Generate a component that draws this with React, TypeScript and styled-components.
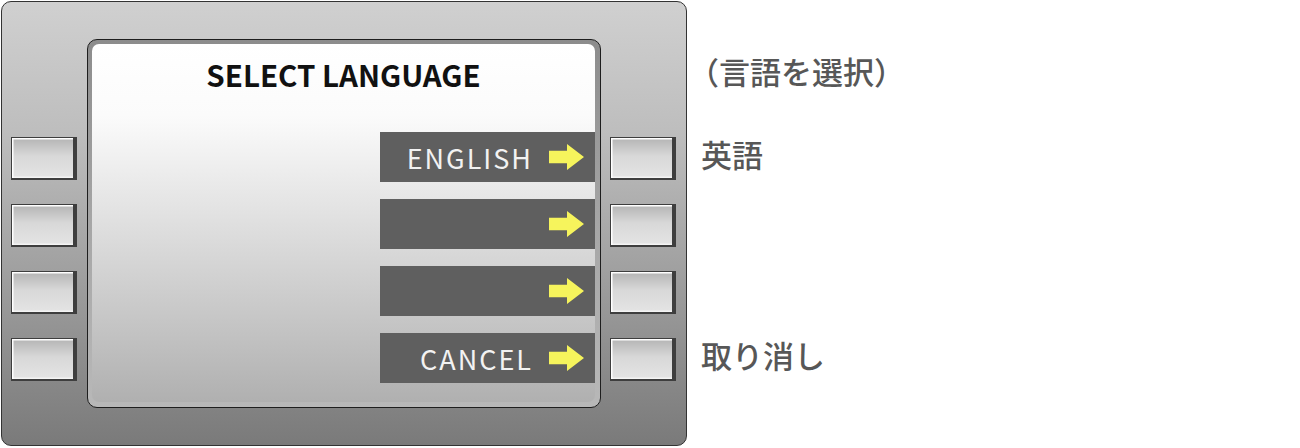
import React from 'react';
import styled, { createGlobalStyle } from 'styled-components';

interface Option {
	label: string;
	note: string;
}

const options: Option[] = [
	{ label: 'ENGLISH', note: '英語' },
	{ label: '', note: '' },
	{ label: '', note: '' },
	{ label: 'CANCEL', note: '取り消し' },
];

const GlobalStyle = createGlobalStyle`
	html, body {
		margin: 0;
		padding: 0;
		background: #ffffff;
	}
	body {
		font-family: "Noto Sans CJK JP", "Noto Sans", sans-serif;
	}
`;

const Page = styled.div`
	display: flex;
	align-items: flex-start;
	padding: 1px 0 0 1px;
	width: 1300px;
	height: 448px;
	box-sizing: border-box;
`;

const Machine = styled.div`
	display: flex;
	align-items: flex-start;
	width: 686px;
	height: 445px;
	box-sizing: border-box;
	padding: 36.5px 0 0 8.5px;
	border: 1.5px solid #333333;
	border-radius: 10px;
	background: linear-gradient(180deg, #d0d0d0 0%, #bdbdbd 30%, #9c9c9c 65%, #7a7a7a 100%);
`;

const KeyColumn = styled.div`
	display: flex;
	flex-direction: column;
	gap: 24px;
	width: 66px;
	margin-top: 98px;
`;

const Key = styled.div`
	width: 66px;
	height: 43px;
	box-sizing: border-box;
	border: 1.5px solid #3e3e3e;
	border-right-width: 4px;
	border-bottom-width: 2px;
	box-shadow: inset 1.5px 1.5px 0 #ffffff, inset 0 -1.5px 0 #f4f4f4;
	background: linear-gradient(180deg, #b4b4b4 0%, #d8d8d8 45%, #e4e4e4 100%);
`;

const Screen = styled.div`
	width: 514px;
	height: 369px;
	margin: 0 9px 0 10px;
	box-sizing: border-box;
	padding: 4.5px;
	border: 1.5px solid #1e1e1e;
	border-radius: 10px;
	background: linear-gradient(180deg, #8c8c8c 0%, #a6a6a6 50%, #b8b8b8 100%);
`;

const Display = styled.div`
	display: flex;
	flex-direction: column;
	align-items: flex-end;
	height: 100%;
	box-sizing: border-box;
	padding-top: 5px;
	border-radius: 7px;
	background: linear-gradient(180deg, #ffffff 0%, #fbfbfb 20%, #e4e4e4 45%, #c8c8c8 75%, #b0b0b0 100%);
`;

const Title = styled.h1`
	align-self: stretch;
	margin: 0 0 33px;
	height: 50px;
	line-height: 50px;
	text-align: center;
	font-size: 29.5px;
	font-weight: 700;
	color: #111111;
`;

const Rows = styled.div`
	display: flex;
	flex-direction: column;
	gap: 17px;
`;

const Row = styled.div`
	display: flex;
	align-items: center;
	justify-content: flex-end;
	gap: 16px;
	width: 215px;
	height: 50px;
	box-sizing: border-box;
	padding-right: 11px;
	background: #5f5f5f;
`;

const RowText = styled.span`
	font-size: 27px;
	letter-spacing: 2px;
	color: #f2f2f2;
	line-height: 1;
`;

const Notes = styled.div`
	display: flex;
	flex-direction: column;
	gap: 17px;
	padding: 45px 0 0 14px;
`;

const Note = styled.div<{ $first?: boolean }>`
	height: 50px;
	line-height: 50px;
	margin-bottom: ${(p) => (p.$first ? '16px' : '0')};
	margin-left: ${(p) => (p.$first ? '-13px' : '0')};
	font-size: 31px;
	font-weight: 500;
	color: #575757;
	white-space: nowrap;
`;

const Arrow: React.FC = () => (
	<svg width="35" height="26" viewBox="0 0 35 26">
		<path d="M0 6.7 H18 V0 L35 13 L18 26 V19.3 H0 Z" fill="#f6f45c" />
	</svg>
);

const App: React.FC = () => (
	<>
		<GlobalStyle />
		<Page>
			<Machine>
				<KeyColumn>
					{options.map((_, i) => <Key key={i} />)}
				</KeyColumn>
				<Screen>
					<Display>
						<Title>SELECT LANGUAGE</Title>
						<Rows>
							{options.map((o, i) => (
								<Row key={i}>
									{o.label && <RowText>{o.label}</RowText>}
									<Arrow />
								</Row>
							))}
						</Rows>
					</Display>
				</Screen>
				<KeyColumn>
					{options.map((_, i) => <Key key={i} />)}
				</KeyColumn>
			</Machine>
			<Notes>
				<Note $first>（言語を選択）</Note>
				{options.map((o, i) => <Note key={i}>{o.note}</Note>)}
			</Notes>
		</Page>
	</>
);

export default App;
